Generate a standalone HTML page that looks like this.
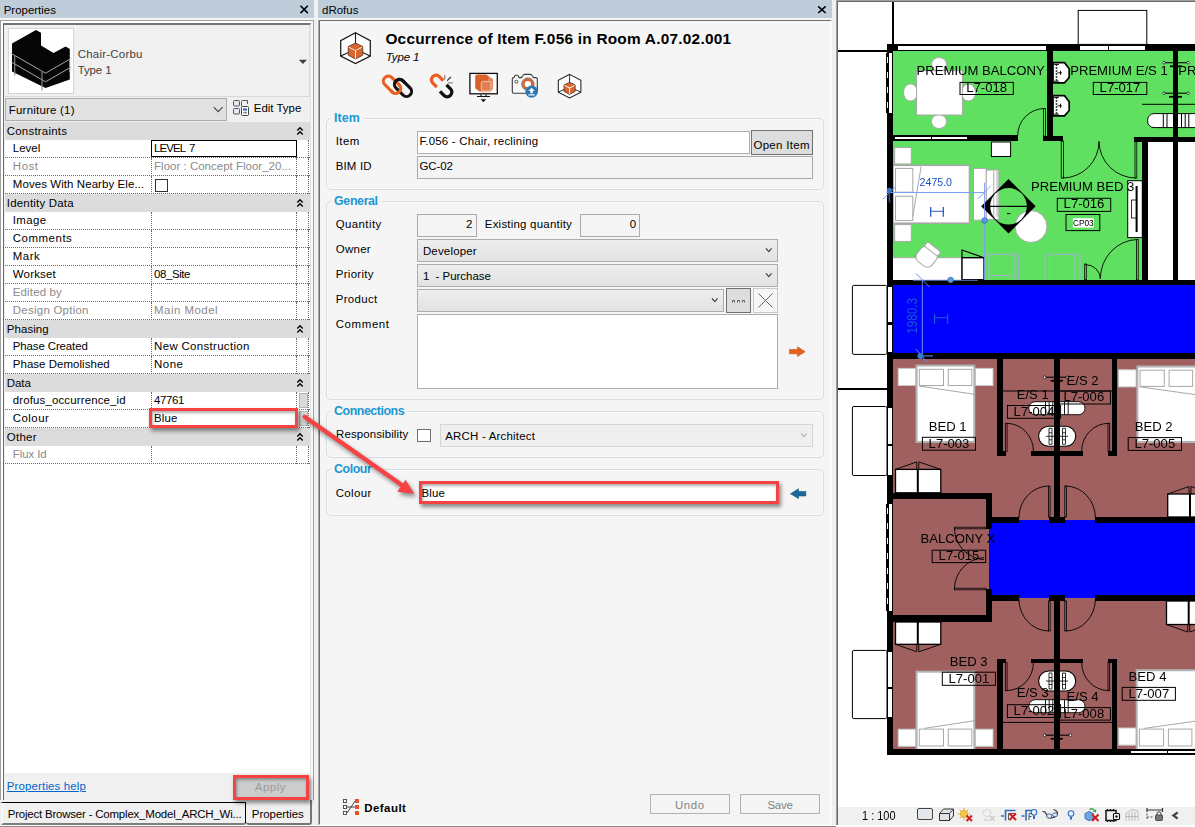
<!DOCTYPE html>
<html lang="en"><head><meta charset="utf-8"><title>dRofus - Revit properties</title>
<style>
html,body{margin:0;padding:0}
body{width:1195px;height:827px;position:relative;overflow:hidden;background:#f0f0f0;
 font-family:"Liberation Sans",sans-serif;font-size:11.46px;color:#000}
div,span,svg{position:absolute;box-sizing:border-box}
.t{white-space:pre;line-height:16px}
.hdr{left:5px;width:305px;height:18px;background:#dcdcdc}
.row{left:5px;width:305px;height:18px;background:#fff;border-bottom:1px dotted #6a6a6a}
.vl{width:0;border-left:1px dotted #6a6a6a}
.grp{border:1px solid #d3dde4;border-radius:5px;box-shadow:inset 0 0 0 1px #fafafa}
.gt{background:#f5f5f5;height:14px}
.inp{border:1px solid #abadb3;background:#fff}
.ro{border:1px solid #a9a9a9;background:#f4f4f4}
.cmb{border:1px solid #acacac;background:linear-gradient(#eeeeee,#e2e2e2)}
.btn{border:1px solid #707070;background:#dddddd}
</style></head>
<body>
<!-- Properties panel -->
<div style="left:0px;top:0px;width:314px;height:18px;background:#bfcddb"></div>
<span class="t" style="left:3.7px;top:2.03px;letter-spacing:0.007px;">Properties</span>
<svg style="left:299px;top:4px" width="11" height="11" viewBox="0 0 11 11"><path d="M1.5 1.8 L8.8 9.1 M8.8 1.8 L1.5 9.1" stroke="#000" stroke-width="1.6" fill="none"/></svg>
<div style="left:0px;top:18px;width:314px;height:2px;background:#f4f4f4"></div>
<div style="left:0px;top:20px;width:314px;height:805px;background:#f0f0f0;border-left:1px solid #a0a0a0;border-top:1px solid #a0a0a0;"></div>
<div style="left:1px;top:21px;width:312px;height:804px;border-left:2px solid #fff;border-top:2px solid #fff;border-right:3px solid #f8f8f8"></div>
<div style="left:313px;top:20px;width:1px;height:805px;background:#a0a0a0"></div>
<div style="left:3px;top:23px;width:308px;height:777px;border-left:1px solid #696969;border-top:2px solid #747474;border-right:1px solid #e3e3e3;background:#f0f0f0"></div>
<div style="left:5px;top:25px;width:305px;height:72px;background:#f0f0f0;border-bottom:1px solid #d9d9d9;border-right:1px solid #dcdcdc"></div>
<div style="left:8px;top:28px;width:66px;height:66px;background:#fff;border:1px solid #d4d4d4"></div>
<svg style="left:8px;top:28px" width="66" height="66" viewBox="8 28 66 66">
<polygon points="12,43.5 36,30 41,32.8 41,45.5 53.5,53 65.6,46.5 69.8,49 69.8,79.5 45.5,88 12,71.5" fill="#060606"/>
<path d="M10.5 53 L45.5 73.2 L71.5 58.2 M10.5 61.5 L45.5 81.8 L71.5 66.8" stroke="#b8b8b8" stroke-width="0.9" fill="none"/>
<path d="M14.7 56 V75.5 M42 72 V90.5 M69.6 60 V72" stroke="#8c8c8c" stroke-width="1.1" fill="none"/>
</svg>
<span class="t" style="left:77.7px;top:46.23px;color:#404040;letter-spacing:0.235px;">Chair-Corbu</span>
<span class="t" style="left:77.7px;top:62.03px;color:#404040;letter-spacing:-0.101px;">Type 1</span>
<svg style="left:298px;top:59px" width="10" height="6" viewBox="0 0 10 6"><polygon points="0.8,0.8 9,0.8 4.9,5" fill="#404040"/></svg>
<div style="left:5px;top:98px;width:222px;height:23px;background:#e1e1e1;border:1px solid #adadad"></div>
<span class="t" style="left:8.8px;top:102.43px;letter-spacing:0.227px;">Furniture (1)</span>
<svg style="left:213px;top:106px" width="11" height="8" viewBox="0 0 11 8"><path d="M0.8 1.2 L5.2 5.6 L9.6 1.2" stroke="#444" stroke-width="1.1" fill="none"/></svg>
<svg style="left:232px;top:99px" width="18" height="18" viewBox="0 0 18 18">
<rect x="1.5" y="1.5" width="6" height="5.5" rx="1" fill="#e4e9f2" stroke="#555" stroke-width="1"/>
<rect x="1.5" y="9.5" width="6" height="5.5" rx="1" fill="#e4e9f2" stroke="#555" stroke-width="1"/>
<path d="M9.5 7 V2.5 a1 1 0 0 1 1 -1 H15.5 V5" fill="#eef1f6" stroke="#555" stroke-width="1"/>
<rect x="9.5" y="7.5" width="7" height="9" rx="1" fill="#fff" stroke="#444" stroke-width="1"/>
<rect x="11" y="9.5" width="4" height="2" fill="#2860c0"/>
<path d="M11 13.7 h3.5 M13.3 12.6 l1.2 1.1 l-1.2 1.1" stroke="#555" stroke-width="0.8" fill="none"/>
</svg>
<span class="t" style="left:253.8px;top:100.03px;">Edit Type</span>
<div class="hdr" style="top:122px"></div>
<span class="t" style="left:6.8px;top:123.03px;letter-spacing:0.213px;">Constraints</span>
<svg style="left:295.5px;top:126px" width="8" height="10" viewBox="0 0 8 10"><path d="M1.3 4.4 L4 1.8 L6.7 4.4 M1.3 8.4 L4 5.800 L6.7 8.4" stroke="#000" stroke-width="1.4" fill="none"/></svg>
<div class="row" style="top:140px"></div>
<div class="vl" style="left:151px;top:140px;height:18px"></div><div class="vl" style="left:296px;top:140px;height:18px"></div><div class="vl" style="left:308px;top:140px;height:18px"></div>
<span class="t" style="left:12.8px;top:140.23px;letter-spacing:0.021px;">Level</span>
<div class="row" style="top:158px"></div>
<div class="vl" style="left:151px;top:158px;height:18px"></div><div class="vl" style="left:296px;top:158px;height:18px"></div><div class="vl" style="left:308px;top:158px;height:18px"></div>
<span class="t" style="left:12.8px;top:158.23px;color:#8a8a8a;letter-spacing:0.559px;">Host</span>
<span class="t" style="left:154.1px;top:158.23px;color:#8a8a8a;letter-spacing:0.025px;">Floor : Concept Floor_20...</span>
<div class="row" style="top:176px"></div>
<div class="vl" style="left:151px;top:176px;height:18px"></div><div class="vl" style="left:296px;top:176px;height:18px"></div><div class="vl" style="left:308px;top:176px;height:18px"></div>
<span class="t" style="left:12.8px;top:176.23px;letter-spacing:0.092px;">Moves With Nearby Ele...</span>
<div class="hdr" style="top:194px"></div>
<span class="t" style="left:6.8px;top:195.03px;letter-spacing:0.205px;">Identity Data</span>
<svg style="left:295.5px;top:198px" width="8" height="10" viewBox="0 0 8 10"><path d="M1.3 4.4 L4 1.8 L6.7 4.4 M1.3 8.4 L4 5.800 L6.7 8.4" stroke="#000" stroke-width="1.4" fill="none"/></svg>
<div class="row" style="top:212px"></div>
<div class="vl" style="left:151px;top:212px;height:18px"></div><div class="vl" style="left:296px;top:212px;height:18px"></div><div class="vl" style="left:308px;top:212px;height:18px"></div>
<span class="t" style="left:12.8px;top:212.23px;letter-spacing:0.390px;">Image</span>
<div class="row" style="top:230px"></div>
<div class="vl" style="left:151px;top:230px;height:18px"></div><div class="vl" style="left:296px;top:230px;height:18px"></div><div class="vl" style="left:308px;top:230px;height:18px"></div>
<span class="t" style="left:12.8px;top:230.23px;letter-spacing:0.524px;">Comments</span>
<div class="row" style="top:248px"></div>
<div class="vl" style="left:151px;top:248px;height:18px"></div><div class="vl" style="left:296px;top:248px;height:18px"></div><div class="vl" style="left:308px;top:248px;height:18px"></div>
<span class="t" style="left:12.8px;top:248.23px;letter-spacing:0.508px;">Mark</span>
<div class="row" style="top:266px"></div>
<div class="vl" style="left:151px;top:266px;height:18px"></div><div class="vl" style="left:296px;top:266px;height:18px"></div><div class="vl" style="left:308px;top:266px;height:18px"></div>
<span class="t" style="left:12.8px;top:266.23px;letter-spacing:0.198px;">Workset</span>
<span class="t" style="left:154.1px;top:266.23px;letter-spacing:-0.410px;">08_Site</span>
<div class="row" style="top:284px"></div>
<div class="vl" style="left:151px;top:284px;height:18px"></div><div class="vl" style="left:296px;top:284px;height:18px"></div><div class="vl" style="left:308px;top:284px;height:18px"></div>
<span class="t" style="left:12.8px;top:284.23px;color:#8a8a8a;letter-spacing:0.157px;">Edited by</span>
<div class="row" style="top:302px"></div>
<div class="vl" style="left:151px;top:302px;height:18px"></div><div class="vl" style="left:296px;top:302px;height:18px"></div><div class="vl" style="left:308px;top:302px;height:18px"></div>
<span class="t" style="left:12.8px;top:302.23px;color:#8a8a8a;letter-spacing:0.260px;">Design Option</span>
<span class="t" style="left:154.1px;top:302.23px;color:#8a8a8a;letter-spacing:0.476px;">Main Model</span>
<div class="hdr" style="top:320px"></div>
<span class="t" style="left:6.8px;top:321.03px;letter-spacing:0.084px;">Phasing</span>
<svg style="left:295.5px;top:324px" width="8" height="10" viewBox="0 0 8 10"><path d="M1.3 4.4 L4 1.8 L6.7 4.4 M1.3 8.4 L4 5.800 L6.7 8.4" stroke="#000" stroke-width="1.4" fill="none"/></svg>
<div class="row" style="top:338px"></div>
<div class="vl" style="left:151px;top:338px;height:18px"></div><div class="vl" style="left:296px;top:338px;height:18px"></div><div class="vl" style="left:308px;top:338px;height:18px"></div>
<span class="t" style="left:12.8px;top:338.23px;letter-spacing:-0.119px;">Phase Created</span>
<span class="t" style="left:154.1px;top:338.23px;letter-spacing:0.322px;">New Construction</span>
<div class="row" style="top:356px"></div>
<div class="vl" style="left:151px;top:356px;height:18px"></div><div class="vl" style="left:296px;top:356px;height:18px"></div><div class="vl" style="left:308px;top:356px;height:18px"></div>
<span class="t" style="left:12.8px;top:356.23px;letter-spacing:0.050px;">Phase Demolished</span>
<span class="t" style="left:154.1px;top:356.23px;letter-spacing:0.501px;">None</span>
<div class="hdr" style="top:374px"></div>
<span class="t" style="left:6.8px;top:375.03px;letter-spacing:-0.052px;">Data</span>
<svg style="left:295.5px;top:378px" width="8" height="10" viewBox="0 0 8 10"><path d="M1.3 4.4 L4 1.8 L6.7 4.4 M1.3 8.4 L4 5.800 L6.7 8.4" stroke="#000" stroke-width="1.4" fill="none"/></svg>
<div class="row" style="top:392px"></div>
<div class="vl" style="left:151px;top:392px;height:18px"></div><div class="vl" style="left:296px;top:392px;height:18px"></div><div class="vl" style="left:308px;top:392px;height:18px"></div>
<span class="t" style="left:12.8px;top:392.23px;letter-spacing:0.139px;">drofus_occurrence_id</span>
<span class="t" style="left:154.1px;top:392.23px;letter-spacing:-0.374px;">47761</span>
<div class="row" style="top:410px"></div>
<div class="vl" style="left:151px;top:410px;height:18px"></div><div class="vl" style="left:296px;top:410px;height:18px"></div><div class="vl" style="left:308px;top:410px;height:18px"></div>
<span class="t" style="left:12.8px;top:410.23px;letter-spacing:0.457px;">Colour</span>
<span class="t" style="left:154.1px;top:410.23px;letter-spacing:0.141px;">Blue</span>
<div class="hdr" style="top:428px"></div>
<span class="t" style="left:6.8px;top:429.03px;letter-spacing:0.268px;">Other</span>
<svg style="left:295.5px;top:432px" width="8" height="10" viewBox="0 0 8 10"><path d="M1.3 4.4 L4 1.8 L6.7 4.4 M1.3 8.4 L4 5.800 L6.7 8.4" stroke="#000" stroke-width="1.4" fill="none"/></svg>
<div class="row" style="top:446px"></div>
<div class="vl" style="left:151px;top:446px;height:18px"></div><div class="vl" style="left:296px;top:446px;height:18px"></div><div class="vl" style="left:308px;top:446px;height:18px"></div>
<span class="t" style="left:12.8px;top:446.23px;color:#8a8a8a;letter-spacing:-0.085px;">Flux Id</span>
<div style="left:5px;top:464px;width:305px;height:309px;background:#fff"></div>
<div style="left:151px;top:140px;width:146px;height:17px;border:1px solid #000;background:#fff"></div>
<span class="t" style="left:154.1px;top:140.33px;letter-spacing:-0.902px;word-spacing:2px;">LEVEL 7</span>
<div style="left:155px;top:179px;width:13px;height:13px;border:1px solid #333;background:#fff"></div>
<div style="left:299px;top:393px;width:9px;height:15px;background:#dadada;border:1px solid #b5b5b5"></div>
<div style="left:299px;top:411px;width:9px;height:15px;background:#dadada;border:1px solid #b5b5b5"></div>
<div style="left:5px;top:773px;width:305px;height:27px;background:#f0f0f0"></div>
<span class="t" style="left:6.8px;top:778.13px;color:#0066cc;letter-spacing:0.148px;text-decoration:underline;text-underline-offset:1px">Properties help</span>
<div style="left:0px;top:800px;width:318px;height:27px;background:#f0f0f0"></div>
<div style="left:0px;top:802px;width:246px;height:23px;background:#f0f0f0;border-top:1px solid #000;border-right:1px solid #000;border-bottom:2px solid #7d7d7d;border-left:3px solid #f0f0f0;border-radius:0 0 3px 3px"></div>
<div style="left:2px;top:803px;width:1px;height:20px;background:#fcfcfc"></div>
<span class="t" style="left:7.7px;top:806.23px;letter-spacing:-0.191px;">Project Browser - Complex_Model_ARCH_Wi...</span>
<div style="left:246px;top:800px;width:66px;height:25px;background:#f0f0f0;border-right:2px solid #767676;border-bottom:2px solid #767676;border-radius:0 0 3px 3px"></div>
<span class="t" style="left:251.8px;top:806.23px;letter-spacing:-0.023px;">Properties</span>
<div style="left:0px;top:825px;width:1195px;height:1px;background:#fbfbfb"></div>
<div style="left:0px;top:826px;width:1195px;height:1px;background:#8c8c8c"></div>
<div style="left:314px;top:0px;width:4px;height:825px;background:#f0f0f0"></div>
<!-- dRofus panel -->
<div style="left:318px;top:0px;width:514px;height:18px;background:#bfcddb"></div>
<span class="t" style="left:322.1px;top:2.03px;">dRofus</span>
<svg style="left:816px;top:4px" width="12" height="11" viewBox="0 0 12 11"><path d="M2.2 2.3 L9.6 9 M9.6 2.3 L2.2 9" stroke="#000" stroke-width="1.6" fill="none"/></svg>
<div style="left:318px;top:18px;width:514px;height:2px;background:#f4f4f4"></div>
<div style="left:832px;top:0px;width:4px;height:825px;background:#f0f0f0"></div>
<div style="left:318px;top:20px;width:514px;height:805px;background:#f5f5f5;border-left:2px solid #6f6f6f;border-top:1px solid #6f6f6f;border-right:2px solid #fbfbfb;border-bottom:1px solid #fbfbfb"></div>
<div style="left:318px;top:20px;width:1px;height:805px;background:#a9a9a9"></div>
<svg style="left:339px;top:31px" width="33.0" height="34.0" viewBox="-1 -1 33 34">
<polygon points="15.5,0.8 30.3,8.6 30.3,24 15.5,31.6 0.7,24 0.7,8.6" fill="#fff" stroke="#1a1a1a" stroke-width="1.25"/>
<path d="M15.5 0.8 V12 M0.7 24 L8.4 20.6 M30.3 24 L22.6 20.6" stroke="#1a1a1a" stroke-width="1.10" fill="none"/>
<polygon points="15.5,11 22.8,14.6 22.8,23.2 15.5,27 8.2,23.2 8.2,14.6" fill="#d9652f" stroke="#3a2418" stroke-width="0.70"/>
<path d="M15.5 18.6 V26.6 M15.5 18.6 L8.8 15.2 M15.5 18.6 L22.2 15.2" stroke="#fbe9df" stroke-width="1.00" fill="none"/>
</svg>
<span class="t" style="left:385.4px;top:30.87px;font-size:15.38px;font-weight:700;letter-spacing:0.242px;">Occurrence of Item F.056 in Room A.07.02.001</span>
<span class="t" style="left:385.7px;top:49.13px;font-style:italic;letter-spacing:-0.081px;">Type 1</span>
<svg style="left:378px;top:70px" width="40" height="32" viewBox="378 70 40 32"><rect x="-10.1" y="-5.0" width="20.2" height="10.0" rx="5.0" transform="translate(392,84.7) rotate(45)" stroke="#ec5f24" stroke-width="3.1" fill="none"/><rect x="-10.0" y="-5.0" width="20.0" height="10.0" rx="5.0" transform="translate(403,87.95) rotate(45)" stroke="#111" stroke-width="3.1" fill="none"/><g transform="translate(392,84.7) rotate(45)"><path d="M2.5 -5 H5.1 A5 5 0 0 1 5.1 5 H3" stroke="#ec5f24" stroke-width="3.1" fill="none"/></g><g transform="translate(403,87.95) rotate(45)"><path d="M-2 -5 H-5 A5 5 0 0 0 -9.7 -1.5" stroke="#111" stroke-width="3.1" fill="none"/></g></svg>
<svg style="left:427px;top:70px" width="32" height="32" viewBox="427 70 32 32">
<g transform="translate(436.1,79.9) rotate(45)"><path d="M5.6 -4.6 H0 A4.6 4.6 0 0 0 0 4.6 H5.6" stroke="#ec5f24" stroke-width="3.4" fill="none"/></g>
<g transform="translate(447.2,92.1) rotate(45)"><path d="M-5.6 -4.6 H0 A4.6 4.6 0 0 1 0 4.6 H-5.6" stroke="#111" stroke-width="3.4" fill="none"/></g>
<path d="M444.7 75.2 V79.6 M448 82.9 H452.7" stroke="#888" stroke-width="1.3" fill="none"/><path d="M447.2 80.6 L450.9 76.9" stroke="#222" stroke-width="1.1" fill="none"/>
</svg>
<svg style="left:468px;top:71px" width="32" height="33" viewBox="468 71 32 33">
<rect x="469.9" y="73.4" width="27.4" height="20.4" fill="#fcfcfc" stroke="#111" stroke-width="1.3"/>
<path d="M476.6 74.6 h9.6 l6.8 5 v9 l-2.4 3 h-11 l-4.4 -3.4 v-11.600 a2 2 0 0 1 2 -2 z" fill="#d9622b"/>
<path d="M486.2 74.6 l6.8 5 v9 l-4.800 -0.200 v-11.800 z" fill="#e3875c"/>
<rect x="481.3" y="81.4" width="9.700" height="9.600" rx="1.800" fill="#e27f52" stroke="#f3cdbb" stroke-width="0.9"/>
<path d="M483 91 l-1.500 1.500 h8.500 l1.500 -1.500" fill="#f1c4af"/>
<path d="M477 96.500 h13 M481 94.400 v2 M486 94.400 v2" stroke="#111" stroke-width="1.200" fill="none"/>
<polygon points="480.7,99.300 486.1,99.300 483.4,102.200" fill="#111"/>
</svg>
<svg style="left:510px;top:72px" width="30" height="28" viewBox="510 72 30 28">
<path d="M514 77.600 l0.800 -1.800 q0.300 -0.500 0.900 -0.500 h1.600 q0.600 0 0.900 0.500 l0.800 1.800 h2.400 l2 -2.600 q0.500 -0.600 1.300 -0.600 h5.600 q0.800 0 1.300 0.600 l2 2.600 h2.200 q1.500 0 1.500 1.500 v12.600 q0 1.500 -1.500 1.500 h-22 q-1.500 0 -1.500 -1.500 v-12.600 q0 -1.500 1.500 -1.500 z" fill="#f9f9f9" stroke="#3c3c3c" stroke-width="1.100"/>
<circle cx="516.4" cy="81.700" r="1.500" fill="#fff" stroke="#3c3c3c" stroke-width="0.900"/>
<circle cx="527.9" cy="84.100" r="4.500" fill="#fff" stroke="#d9622b" stroke-width="2.600"/>
<circle cx="527.9" cy="84.100" r="6.200" fill="none" stroke="#3c3c3c" stroke-width="0.700"/>
<circle cx="531.6" cy="91.600" r="6.200" fill="#2f79b3"/>
<path d="M531.600 87.800 l3.100 3.300 h-1.900 v2.200 h-2.400 v-2.200 h-1.900 z" fill="#fff"/><path d="M528.400 94.900 h6.400" stroke="#fff" stroke-width="1.200"/>
</svg>
<svg style="left:557px;top:73px" width="25.2" height="26.0" viewBox="-1 -1 33 34">
<polygon points="15.5,0.8 30.3,8.6 30.3,24 15.5,31.6 0.7,24 0.7,8.6" fill="#fff" stroke="#1a1a1a" stroke-width="1.33"/>
<path d="M15.5 0.8 V12 M0.7 24 L8.4 20.6 M30.3 24 L22.6 20.6" stroke="#1a1a1a" stroke-width="1.17" fill="none"/>
<polygon points="15.5,11 22.8,14.6 22.8,23.2 15.5,27 8.2,23.2 8.2,14.6" fill="#d9652f" stroke="#3a2418" stroke-width="0.93"/>
<path d="M15.5 18.6 V26.6 M15.5 18.6 L8.8 15.2 M15.5 18.6 L22.2 15.2" stroke="#fbe9df" stroke-width="1.33" fill="none"/>
</svg>
<div class="grp" style="left:326px;top:118px;width:498px;height:72px;"></div>
<div class="gt" style="left:331px;top:112px;width:32.8px;height:14px;"></div>
<span class="t" style="left:334.1px;top:109.50px;font-size:12.41px;font-weight:700;color:#1c97d4;letter-spacing:0.071px;">Item</span>
<div class="grp" style="left:326px;top:201px;width:498px;height:199px;"></div>
<div class="gt" style="left:331px;top:195px;width:50.6px;height:14px;"></div>
<span class="t" style="left:334.1px;top:192.50px;font-size:12.41px;font-weight:700;color:#1c97d4;letter-spacing:-0.374px;">General</span>
<div class="grp" style="left:326px;top:411px;width:498px;height:47px;"></div>
<div class="gt" style="left:331px;top:405px;width:77px;height:14px;"></div>
<span class="t" style="left:334.1px;top:402.50px;font-size:12.41px;font-weight:700;color:#1c97d4;letter-spacing:-0.468px;">Connections</span>
<div class="grp" style="left:326px;top:469px;width:498px;height:47px;"></div>
<div class="gt" style="left:331px;top:463px;width:44.3px;height:14px;"></div>
<span class="t" style="left:334.1px;top:460.50px;font-size:12.41px;font-weight:700;color:#1c97d4;letter-spacing:-0.447px;">Colour</span>
<span class="t" style="left:335.7px;top:133.43px;letter-spacing:0.428px;">Item</span>
<div class="inp" style="left:417px;top:131px;width:333px;height:23px;"></div>
<span class="t" style="left:419.4px;top:133.43px;letter-spacing:0.207px;">F.056 - Chair, reclining</span>
<div class="btn" style="left:751px;top:130px;width:62px;height:25px;"></div>
<span class="t" style="left:753.4px;top:136.63px;letter-spacing:0.344px;">Open Item</span>
<span class="t" style="left:335.7px;top:158.33px;letter-spacing:0.164px;">BIM ID</span>
<div class="ro" style="left:417px;top:156px;width:396px;height:23px;"></div>
<span class="t" style="left:419.4px;top:158.33px;letter-spacing:-0.051px;">GC-02</span>
<span class="t" style="left:335.7px;top:216.13px;letter-spacing:0.415px;">Quantity</span>
<div class="ro" style="left:417px;top:214px;width:60px;height:23px;"></div>
<span class="t" style="left:465.9px;top:216.13px;letter-spacing:0.626px;">2</span>
<span class="t" style="left:484.8px;top:216.13px;letter-spacing:0.226px;">Existing quantity</span>
<div class="ro" style="left:580px;top:214px;width:60px;height:23px;"></div>
<span class="t" style="left:629.7px;top:216.13px;letter-spacing:0.626px;">0</span>
<span class="t" style="left:335.7px;top:241.23px;letter-spacing:0.309px;">Owner</span>
<div class="cmb" style="left:417px;top:239px;width:361px;height:23px;"></div>
<span class="t" style="left:422.9px;top:243.23px;letter-spacing:0.196px;">Developer</span>
<span class="t" style="left:335.7px;top:266.33px;letter-spacing:0.318px;">Priority</span>
<div class="cmb" style="left:417px;top:264px;width:361px;height:23px;"></div>
<span class="t" style="left:422.9px;top:268.23px;letter-spacing:-0.012px;">1  - Purchase</span>
<span class="t" style="left:335.7px;top:290.63px;letter-spacing:0.358px;">Product</span>
<div class="cmb" style="left:417px;top:289px;width:307px;height:23px;"></div>
<svg style="left:765px;top:247px" width="8" height="7" viewBox="0 0 8 7"><path d="M1 1.3 L3.8 4.6 L6.6 1.3" stroke="#444" stroke-width="1.3" fill="none"/></svg>
<svg style="left:765px;top:272px" width="8" height="7" viewBox="0 0 8 7"><path d="M1 1.3 L3.8 4.6 L6.6 1.3" stroke="#444" stroke-width="1.3" fill="none"/></svg>
<svg style="left:711px;top:297px" width="8" height="7" viewBox="0 0 8 7"><path d="M1 1.3 L3.8 4.6 L6.6 1.3" stroke="#444" stroke-width="1.3" fill="none"/></svg>
<div class="btn" style="left:726px;top:288px;width:25px;height:25px;"></div>
<svg style="left:731px;top:298px" width="15" height="6" viewBox="0 0 15 6"><path d="M1.5 4.5 v-2 h2 v2 M6.5 4.5 v-2 h2 v2 M11.5 4.5 v-2 h2 v2" stroke="#555" stroke-width="0.9" fill="none"/></svg>
<div style="left:753px;top:288px;width:25px;height:25px;border:1px solid #c9c9c9;background:#f6f6f6"></div>
<svg style="left:753px;top:288px" width="25" height="25" viewBox="0 0 25 25"><path d="M5.5 5.5 L19.5 19.5 M19.5 5.5 L5.5 19.5" stroke="#555" stroke-width="0.9" fill="none"/></svg>
<span class="t" style="left:335.7px;top:316.13px;letter-spacing:0.618px;">Comment</span>
<div class="inp" style="left:417px;top:314px;width:361px;height:75px;"></div>
<svg style="left:788px;top:345px" width="19" height="13" viewBox="788 345 19 13"><polygon points="789.5,349.5 797.5,349.5 797.5,346.8 805.2,351.7 797.5,356.4 797.5,353.8 789.5,353.8" fill="#e8601c" stroke="#c24e14" stroke-width="0.6"/></svg>
<span class="t" style="left:336.0px;top:425.63px;letter-spacing:0.121px;">Responsibility</span>
<div style="left:417px;top:429px;width:14px;height:13px;border:1px solid #707070;background:#fff"></div>
<div style="left:440px;top:424px;width:373px;height:23px;border:1px solid #d5d5d5;background:#efefef"></div>
<span class="t" style="left:445.2px;top:428.43px;letter-spacing:0.212px;">ARCH - Architect</span>
<svg style="left:800px;top:432px" width="8" height="7" viewBox="0 0 8 7"><path d="M1 1.3 L3.8 4.6 L6.6 1.3" stroke="#b5b5b5" stroke-width="1.3" fill="none"/></svg>
<span class="t" style="left:335.7px;top:484.63px;letter-spacing:0.373px;">Colour</span>
<svg style="left:789px;top:487px" width="19" height="13" viewBox="789 487 19 13"><polygon points="805.8,491.5 798.5,491.5 798.5,488.8 790.5,493.8 798.5,498.6 798.5,496 805.8,496" fill="#1a6a9a" stroke="#145578" stroke-width="0.6"/></svg>
<svg style="left:342px;top:798px" width="18" height="18" viewBox="342 798 18 18">
<g fill="#fff" stroke="#444" stroke-width="0.9"><rect x="343.5" y="799.5" width="3" height="3"/><rect x="343.5" y="805.5" width="3" height="3"/><rect x="343.5" y="811.5" width="3" height="3"/></g>
<path d="M347 813 L355.5 800.5 M347 807 H355" stroke="#333" stroke-width="0.9" fill="none"/>
<g fill="#e8502a"><rect x="355" y="799" width="4" height="4"/><rect x="355" y="805" width="4" height="4"/><rect x="355" y="811" width="4" height="4"/></g>
</svg>
<span class="t" style="left:364.2px;top:800.33px;font-weight:700;letter-spacing:0.480px;">Default</span>
<div style="left:650px;top:794px;width:80px;height:20px;border:1px solid #adb2b5;background:#f4f4f4"></div>
<span class="t" style="left:675.0px;top:797.43px;color:#838383;letter-spacing:0.601px;">Undo</span>
<div style="left:740px;top:794px;width:80px;height:20px;border:1px solid #adb2b5;background:#f4f4f4"></div>
<span class="t" style="left:767.4px;top:797.43px;color:#838383;letter-spacing:-0.205px;">Save</span>
<!-- Floor plan view -->
<svg style="left:836px;top:0px;will-change:transform" width="359" height="827" viewBox="836 0 359 827" font-family="Liberation Sans, sans-serif" font-size="13.1">
<defs><mask id="dm" maskUnits="userSpaceOnUse" x="975" y="175" width="70" height="65"><polygon points="1008.5,179.1 1035.7,206.3 1008.5,233.6 981.2,206.3" fill="#fff"/><circle cx="1008.5" cy="206.3" r="18.3" fill="#000"/></mask></defs>
<rect x="836" y="0" width="359" height="827" fill="#fff"/>
<g shape-rendering="crispEdges">
<rect x="836" y="0" width="359" height="1" fill="#a0a0a0"/><rect x="837" y="1" width="358" height="1" fill="#696969"/>
<rect x="836" y="0" width="1" height="825" fill="#a0a0a0"/><rect x="837" y="1" width="1" height="824" fill="#696969"/>
<rect x="893" y="51" width="302" height="230" fill="#60e060"/>
<rect x="1148" y="142" width="25" height="138" fill="#fff"/><rect x="1178" y="142" width="17" height="138" fill="#fff"/>
<rect x="893" y="284" width="302" height="70" fill="#0000ff"/>
<rect x="893" y="358" width="302" height="392" fill="#a06060"/>
<rect x="989" y="520" width="206" height="78" fill="#0000ff"/>
</g>
<g fill="#fff" stroke="#a8a8a8" stroke-width="1">
<ellipse cx="939" cy="64.5" rx="7.6" ry="7"/>
<ellipse cx="939" cy="121.5" rx="7.6" ry="7"/>
<ellipse cx="910.5" cy="92.5" rx="7" ry="8.6"/>
<ellipse cx="968.5" cy="92.5" rx="7" ry="8.6"/>
<rect x="916.6" y="70.7" width="45.8" height="44.3"/>
<rect x="894.7" y="147.5" width="16.6" height="16.5"/><rect x="894.7" y="224.6" width="16.6" height="16.8"/>
<rect x="893" y="165.3" width="76.5" height="57.9" stroke-width="1.6"/>
<rect x="895.5" y="168.4" width="17.3" height="23.8"/><rect x="895.5" y="196.3" width="17.3" height="24.2"/>
<path d="M921.1 166.5 L912.8 216.7" fill="none"/>
<rect x="973.5" y="168.4" width="12.8" height="51.8"/><rect x="986.3" y="170" width="12.5" height="49.4"/><path d="M993.8 171 V217 M997 171 V217" fill="none"/>
<circle cx="1031" cy="226.5" r="16"/>
<rect x="893" y="257.7" width="68.2" height="23" stroke="none"/><path d="M893 257.7 H961.2" fill="none"/>
<g transform="translate(927,257) rotate(38)"><rect x="-10" y="-9" width="19" height="18" rx="6"/><rect x="-9" y="-12.5" width="17" height="5.5" rx="2"/></g>
<g stroke="#c8c8c8">
<rect x="898.2" y="368.4" width="17.5" height="17.1"/>
<rect x="975.5" y="368.4" width="17.5" height="17.1"/>
<rect x="1118.6" y="369.8" width="17.5" height="17.1"/>
<rect x="898.2" y="729.2" width="17.5" height="17.1"/>
<rect x="975.5" y="729.2" width="17.5" height="17.1"/>
<rect x="1118.7" y="728" width="17.5" height="17.1"/>
</g>
<rect x="916.6" y="365.6" width="57.7" height="76.3" stroke-width="2" stroke="#b4b4b4"/>
<rect x="919.3000000000001" y="369.3" width="24.2" height="16.2"/><rect x="948.3000000000001" y="369.3" width="23.5" height="16.2"/>
<path d="M919.3000000000001 386.0 L974.3000000000001 394.3" fill="none"/>
<rect x="1137.4" y="366.5" width="62" height="75.5" stroke-width="2" stroke="#b4b4b4"/>
<rect x="1140.1000000000001" y="370.2" width="24.2" height="16.2"/><rect x="1169.1000000000001" y="370.2" width="23.5" height="16.2"/>
<path d="M1140.1000000000001 386.9 L1199.4 395.2" fill="none"/>
<rect x="916.6" y="671.7" width="57.7" height="78" stroke-width="2" stroke="#b4b4b4"/>
<rect x="919.3000000000001" y="729.1" width="24.2" height="16.9"/><rect x="948.3000000000001" y="729.1" width="23.5" height="16.9"/>
<path d="M924.2 728.4000000000001 L974.3000000000001 720.7" fill="none"/>
<rect x="1136.7" y="670.2" width="62" height="79.5" stroke-width="2" stroke="#b4b4b4"/>
<rect x="1139.4" y="729.1" width="24.2" height="16.9"/><rect x="1168.4" y="729.1" width="23.5" height="16.9"/>
<path d="M1144.3 728.4000000000001 L1198.7 720.7" fill="none"/>
</g>
<g fill="none" stroke="#a3b1d9" stroke-width="1"><rect x="984.6" y="254.3" width="34" height="27"/><path d="M989 254.3 V281 M1014 254.3 V281 M989 275.5 H1014"/><rect x="1045" y="254.3" width="35" height="27"/><path d="M1049.5 254.3 V281 M1075 254.3 V281"/></g>
<g fill="#fff" stroke="#000" stroke-width="1">
<rect x="991.4" y="142" width="19.2" height="14.5"/>
<rect x="1127.7" y="180.7" width="14.6" height="56.9"/><rect x="1131.5" y="200" width="5" height="18" stroke-width="0.8"/><path d="M1136.6 186 V232" stroke-width="2"/>
<rect x="962" y="257.7" width="22" height="22" stroke-width="1.4"/><path d="M962 257.7 V250 L984 257.7" fill="none" stroke-width="1.2"/>
<path d="M1053 62.7 H1064.5 L1069.2 68.7 V77.5 L1064.5 82.80000000000001 H1053 Z" stroke-width="1.7"/><path d="M1056.5 64.2 V81.2" fill="none" stroke-width="1.6" stroke-dasharray="1.5 1.5"/><path d="M1054 64.4 H1059 M1054 81.2 H1059 M1057.5 72.8 H1062 M1060.5 70.7 V74.9" fill="none" stroke-width="0.9"/>
<path d="M1053 95.7 H1064.5 L1069.2 101.7 V110.5 L1064.5 115.80000000000001 H1053 Z" stroke-width="1.7"/><path d="M1056.5 97.2 V114.2" fill="none" stroke-width="1.6" stroke-dasharray="1.5 1.5"/><path d="M1054 97.4 H1059 M1054 114.2 H1059 M1057.5 105.8 H1062 M1060.5 103.7 V107.9" fill="none" stroke-width="0.9"/>
<rect x="1147.6" y="113.6" width="60" height="14" rx="6.5"/><path d="M1163.3 113.6 V127.6 M1167 113.6 V127.6 M1181.5 113.6 V127.6 M1185.2 113.6 V127.6 M1188.8 113.6 V127.6" fill="none"/>
<rect x="1028.8" y="401.7" width="56.2" height="13" rx="6.5" stroke-width="0.9"/><path d="M1045.5 401.7 v13 M1049.2 401.7 v13 M1052.8 401.7 v13 M1064.5 401.7 v13 M1068.2 401.7 v13" fill="none" stroke-width="0.9"/>
<rect x="1028.8" y="699.7" width="56.2" height="13" rx="6.5" stroke-width="0.9"/><path d="M1045.5 699.7 v13 M1049.2 699.7 v13 M1052.8 699.7 v13 M1064.5 699.7 v13 M1068.2 699.7 v13" fill="none" stroke-width="0.9"/>
<rect x="1038.6" y="426.3" width="37.1" height="20" rx="10" stroke-width="1.1"/><path d="M1049 428.3 v16 M1052 428.3 v16 M1062.5 428.3 v16 M1065.5 428.3 v16 M1049 428.3 h3 M1049 444.3 h3 M1062.5 428.3 h3 M1062.5 444.3 h3 M1046 436.3 h8 M1060 436.3 h8 M1049 432.8 h3 M1049 439.8 h3 M1062.5 432.8 h3 M1062.5 439.8 h3" fill="none" stroke-width="0.8"/>
<rect x="1038.6" y="671" width="37.1" height="20" rx="10" stroke-width="1.1"/><path d="M1049 673 v16 M1052 673 v16 M1062.5 673 v16 M1065.5 673 v16 M1049 673 h3 M1049 689 h3 M1062.5 673 h3 M1062.5 689 h3 M1046 681 h8 M1060 681 h8 M1049 677.5 h3 M1049 684.5 h3 M1062.5 677.5 h3 M1062.5 684.5 h3" fill="none" stroke-width="0.8"/>
<rect x="895.5" y="469.4" width="45.3" height="23.4" stroke-width="1.3"/><path d="M917.8 469.4 V492.79999999999995" stroke-width="2" fill="none"/>
<path d="M895.5 469.4 L916.8 461.9 V469.4 M940.8 469.4 L918.8 461.9 V469.4" fill="none" stroke-width="0.9"/>
<rect x="1167.7" y="494" width="45" height="23" stroke-width="1.3"/><path d="M1190 494 V517" stroke-width="2" fill="none"/>
<path d="M1167.7 494 L1189 486.5 V494 M1212.7 494 L1191 486.5 V494" fill="none" stroke-width="0.9"/>
<rect x="895.5" y="622" width="45.3" height="22.3" stroke-width="1.3"/><path d="M917.8 622 V644.3" stroke-width="2" fill="none"/>
<path d="M895.5 644.3 L916.8 651.8 V644.3 M940.8 644.3 L918.8 651.8 V644.3" fill="none" stroke-width="0.9"/>
<rect x="1166.5" y="601" width="45" height="23.5" stroke-width="1.3"/><path d="M1188.7 601 V624.5" stroke-width="2" fill="none"/>
<path d="M1166.5 624.5 L1187.7 632.0 V624.5 M1211.5 624.5 L1189.7 632.0 V624.5" fill="none" stroke-width="0.9"/>
</g>
<g fill="none" stroke="#000" stroke-width="1">
<path d="M1142 104.3 H1195 M1002.8 391 H1112 M1002.8 722.4 H1112"/>
<path d="M1164 62.7 H1188" stroke-width="1.1"/><path d="M1170 66.3 H1182" stroke-width="1.8"/><circle cx="1164" cy="62.7" r="1.3" fill="#fff" stroke-width="0.7"/><circle cx="1188" cy="62.7" r="1.3" fill="#fff" stroke-width="0.7"/>
<path d="M1164 93.2 H1188" stroke-width="1.1"/><path d="M1169 96.8 H1182" stroke-width="1.8"/><circle cx="1164" cy="93.2" r="1.3" fill="#fff" stroke-width="0.7"/><circle cx="1188" cy="93.2" r="1.3" fill="#fff" stroke-width="0.7"/>
<path d="M1044.7 377.2 H1067.4" stroke-width="1.1"/><path d="M1050.7 380.8 H1062.8" stroke-width="1.8"/><circle cx="1044.7" cy="377.2" r="1.3" fill="#fff" stroke-width="0.7"/><circle cx="1067.4" cy="377.2" r="1.3" fill="#fff" stroke-width="0.7"/>
<path d="M1044.7 735.2 H1070.4" stroke-width="1.1"/><path d="M1050.7 738.8000000000001 H1062.8" stroke-width="1.8"/><circle cx="1044.7" cy="735.2" r="1.3" fill="#fff" stroke-width="0.7"/><circle cx="1070.4" cy="735.2" r="1.3" fill="#fff" stroke-width="0.7"/>
<rect x="1043.4" y="108.5" width="2.2" height="27.5" stroke-width="0.8"/><path d="M1044.5 108.5 A27 27 0 0 0 1017.7 135.5" stroke-width="0.9"/>
<rect x="1061.2" y="141" width="2.3" height="37" stroke-width="0.8"/><path d="M1062.5 178 A36.6 36.6 0 0 0 1099 141.4" stroke-width="0.9"/>
<rect x="1135" y="141" width="1.8" height="37" stroke-width="0.8"/><path d="M1136 178 A37 37 0 0 1 1099 141.4" stroke-width="0.9"/>
<rect x="1136.6" y="239.5" width="1.6" height="40" stroke-width="0.8"/><path d="M1137.4 239.5 A38 39 0 0 0 1100.4 278.7" stroke-width="0.9"/>
<rect x="1084.7" y="264" width="1.6" height="16" stroke-width="0.8"/><path d="M1085.9 264.7 A14.5 14.5 0 0 1 1100.4 278.7" stroke-width="0.9"/>
<rect x="1005.4" y="423.3" width="1.7" height="28" stroke-width="0.8"/><path d="M1007 423.3 A27 27.7 0 0 1 1033.4 451" stroke-width="0.9"/>
<rect x="1108" y="423.3" width="1.7" height="28" stroke-width="0.8"/><path d="M1108.5 423.3 A27 27.7 0 0 0 1081.7 451" stroke-width="0.9"/>
<rect x="1005.4" y="662.7" width="1.7" height="28" stroke-width="0.8"/><path d="M1007 690.6 A27 27.9 0 0 0 1033.4 662.7" stroke-width="0.9"/>
<rect x="1108" y="662.7" width="1.7" height="28" stroke-width="0.8"/><path d="M1108.5 690.6 A27 27.9 0 0 1 1081.7 662.7" stroke-width="0.9"/>
<rect x="1048.4" y="486" width="1.7" height="31" stroke-width="0.8"/><path d="M1048.4 486 A30 32 0 0 0 1018.9 518.5" stroke-width="0.9"/>
<rect x="1064.8" y="486" width="1.7" height="31" stroke-width="0.8"/><path d="M1066 486 A30 32 0 0 1 1095.4 518.5" stroke-width="0.9"/>
<rect x="1048.4" y="601" width="1.7" height="30" stroke-width="0.8"/><path d="M1048.4 631 A30 32 0 0 1 1018.9 599" stroke-width="0.9"/>
<rect x="1064.8" y="601" width="1.7" height="30" stroke-width="0.8"/><path d="M1066 631 A30 32 0 0 0 1095.4 599" stroke-width="0.9"/>
<rect x="954.4" y="527.2" width="31.6" height="1.6" stroke-width="0.8"/><path d="M954.4 528 A31.6 31.6 0 0 0 984 559.6" stroke-width="0.9"/>
<rect x="954.4" y="588.2" width="31.6" height="1.6" stroke-width="0.8"/><path d="M954.4 589 A31.6 31.6 0 0 1 984 557.6" stroke-width="0.9"/>
</g>
<g shape-rendering="crispEdges" fill="#000">
<rect x="887" y="44" width="6" height="711"/>
<rect x="887" y="44" width="308" height="7"/>
<rect x="1047" y="44" width="6" height="97"/>
<rect x="1173" y="51" width="5" height="230"/>
<rect x="893" y="135" width="125" height="6"/>
<rect x="1043" y="136" width="20" height="5"/>
<rect x="1134" y="137" width="61" height="5"/>
<rect x="1142" y="137" width="6" height="144"/>
<rect x="887" y="280" width="308" height="5"/>
<rect x="887" y="353" width="308" height="6"/>
<rect x="997" y="358" width="6" height="98"/>
<rect x="997" y="451" width="9" height="5"/>
<rect x="1054" y="358" width="6" height="165"/>
<rect x="1054" y="595" width="6" height="155"/>
<rect x="1112" y="358" width="5" height="98"/>
<rect x="1108" y="451" width="9" height="5"/>
<rect x="1031" y="451" width="52" height="5"/>
<rect x="887" y="493" width="105" height="6"/>
<rect x="986" y="493" width="6" height="36"/>
<rect x="992" y="517" width="27" height="6"/>
<rect x="1049" y="517" width="16" height="6"/>
<rect x="1095" y="517" width="100" height="6"/>
<rect x="992" y="595" width="27" height="6"/>
<rect x="1049" y="595" width="16" height="6"/>
<rect x="1095" y="595" width="100" height="6"/>
<rect x="986" y="589" width="6" height="33"/>
<rect x="887" y="615" width="105" height="7"/>
<rect x="997" y="659" width="6" height="91"/>
<rect x="997" y="659" width="9" height="4"/>
<rect x="1112" y="659" width="5" height="91"/>
<rect x="1108" y="659" width="9" height="4"/>
<rect x="1031" y="659" width="52" height="4"/>
<rect x="887" y="749" width="308" height="6"/>
<rect x="892" y="2" width="2" height="42"/>
<rect x="838" y="50" width="49" height="2"/>
<rect x="838" y="388" width="49" height="2"/>
<g fill="#fff">
<rect x="898" y="46" width="148" height="4"/>
<rect x="1080" y="46" width="28" height="4"/>
<rect x="1109" y="46" width="36" height="4"/>
<rect x="895" y="137" width="36" height="2"/>
<rect x="932" y="137" width="35" height="2"/>
<rect x="1131" y="751" width="36" height="2"/>
<rect x="1168" y="751" width="27" height="2"/>
<rect x="889" y="53" width="3" height="60"/>
<rect x="889" y="504" width="3" height="107"/>
<rect x="888" y="287" width="4" height="35"/>
<rect x="888" y="325" width="4" height="27"/>
<rect x="888" y="408" width="4" height="36"/>
<rect x="888" y="446" width="4" height="29"/>
<rect x="888" y="652" width="4" height="35"/>
<rect x="888" y="689" width="4" height="28"/>
</g>
<rect x="886" y="53" width="1" height="60"/><rect x="886" y="504" width="1" height="107"/>
<path d="M887.5 54 V112 M887.5 505 V610" stroke="#fff" stroke-width="1" stroke-dasharray="6 9" stroke-dashoffset="-3" fill="none"/>
</g>
<g fill="#fff" stroke="#000" stroke-width="1"><rect x="852.4" y="285.4" width="34.6" height="69" rx="1.5"/><rect x="852.4" y="406.5" width="34.6" height="69" rx="1.5"/><rect x="852.4" y="650.4" width="34.6" height="68.2" rx="1.5"/><rect x="1078.2" y="10.4" width="68.6" height="34"/></g>
<rect x="975" y="175" width="70" height="65" fill="#000" mask="url(#dm)"/>
<path d="M990 206.4 H1027.500" stroke="#000" stroke-width="1.1"/><path d="M1007 213.6 h3.4" stroke="#000" stroke-width="1"/>
<text x="916.6" y="74.8">PREMIUM BALCONY</text>
<rect x="960" y="82.4" width="53.3" height="12.1" fill="none" stroke="#000" stroke-width="1"/>
<text x="986.6" y="91.7" text-anchor="middle">L7-018</text>
<text x="1070.2" y="74.8">PREMIUM E/S 1</text>
<rect x="1093.3" y="82.4" width="53.5" height="12.1" fill="none" stroke="#000" stroke-width="1"/>
<text x="1120.0" y="91.7" text-anchor="middle">L7-017</text>
<text x="1178.2" y="74.8">PREMIUM E/S 2</text>
<text x="1031" y="191.3">PREMIUM BED 3</text>
<rect x="1057.3" y="198.3" width="53.4" height="13.1" fill="none" stroke="#000" stroke-width="1"/>
<text x="1084.0" y="208.4" text-anchor="middle">L7-016</text>
<rect x="1066" y="214.5" width="33.8" height="16.1" fill="none" stroke="#000"/><rect x="1072.9" y="218.2" width="20.8" height="9.4" fill="#fff"/>
<text x="1083.3" y="226.2" font-size="8.3" text-anchor="middle">CP03</text>
<text x="928.7" y="430.5">BED 1</text>
<rect x="922.4" y="437.3" width="53.1" height="12.9" fill="none" stroke="#000" stroke-width="1"/>
<text x="949.0" y="447.5" text-anchor="middle">L7-003</text>
<text x="1066.6" y="384.5">E/S 2</text>
<text x="1016.7" y="398.7">E/S 1</text>
<rect x="1057.1" y="391" width="53.3" height="13.0" fill="none" stroke="#000" stroke-width="1"/>
<text x="1083.8" y="401.4" text-anchor="middle">L7-006</text>
<rect x="1007.4" y="405.5" width="53.2" height="12.8" fill="none" stroke="#000" stroke-width="1"/>
<text x="1034.0" y="416" text-anchor="middle">L7-004</text>
<text x="1134.7" y="430.6">BED 2</text>
<rect x="1128.2" y="437.6" width="53.3" height="12.8" fill="none" stroke="#000" stroke-width="1"/>
<text x="1154.8" y="447.6" text-anchor="middle">L7-005</text>
<text x="920.6" y="542.7">BALCONY X</text>
<rect x="932.2" y="550.2" width="53.5" height="12.4" fill="none" stroke="#000" stroke-width="1"/>
<text x="959.0" y="560" text-anchor="middle">L7-015</text>
<text x="949.8" y="665.7">BED 3</text>
<rect x="942.3" y="672.2" width="53.2" height="13.1" fill="none" stroke="#000" stroke-width="1"/>
<text x="968.9" y="682.8" text-anchor="middle">L7-001</text>
<text x="1016.7" y="697.4">E/S 3</text>
<text x="1066.6" y="700.5">E/S 4</text>
<rect x="1007.4" y="704.7" width="53.2" height="12.8" fill="none" stroke="#000" stroke-width="1"/>
<text x="1034.0" y="715.1" text-anchor="middle">L7-002</text>
<rect x="1057.1" y="707.6" width="53.3" height="12.5" fill="none" stroke="#000" stroke-width="1"/>
<text x="1083.8" y="717.5" text-anchor="middle">L7-008</text>
<text x="1128.6" y="681">BED 4</text>
<rect x="1122.2" y="687.4" width="53.2" height="12.9" fill="none" stroke="#000" stroke-width="1"/>
<text x="1148.8" y="698.2" text-anchor="middle">L7-007</text>
<g fill="none" stroke="#7d9ff5" stroke-width="1">
<path d="M886.4 192.5 H984.6 M883 199.2 L896 186.2 M977.5 199.2 L991 185.7 M984.6 182.7 V280"/>
<path d="M922.3 280 V358" stroke="#6d8cff"/><path d="M916 273.5 L929.5 287 M916 349 L927 362" stroke="#6d8cff"/>
<path d="M913 280.3 H977.8" stroke="#5a78c8"/><path d="M920 355.9 H933" stroke="#4a6ab8" stroke-width="1.4"/>
<path d="M889.4 192 V202.5" stroke="#30509c" stroke-width="1.6"/>
</g>
<circle cx="889.4" cy="190.3" r="2.6" fill="#3a6fc8"/><circle cx="984.6" cy="220.5" r="2.8" fill="#5b9be0" stroke="#3a6ab0" stroke-width="0.8"/>
<circle cx="950.6" cy="280" r="2.8" fill="#5b9be0" stroke="#3a6ab0" stroke-width="0.8"/><circle cx="920.4" cy="355.9" r="3" fill="#3a78d0"/>
<text x="919.6" y="185.7" font-size="10.6" fill="#1a4fc4">2475.0</text>
<path d="M930.7 207 V216.7 M943.3 207 V216.7" stroke="#1a4fc4" stroke-width="1.2" fill="none"/><path d="M930.7 211.3 H943.3" stroke="#1a4fc4" stroke-width="0.9" fill="none"/>
<text transform="translate(917,333.8) rotate(-90) scale(0.77,1)" font-size="15.2" fill="#1759cf">1980.3</text>
<path d="M934.5 314 V323.7 M947.7 314 V323.7 M934.5 317.7 H947.7" stroke="#1e62d6" stroke-width="1.1" fill="none"/>
<rect x="838" y="807" width="357" height="18" fill="#f0f0f0"/>
<text x="862" y="820" font-size="12" textLength="33.5" lengthAdjust="spacingAndGlyphs">1 : 100</text>
</svg>
<svg style="left:910px;top:806px" width="285" height="19" viewBox="910 806 285 19">
<rect x="917.5" y="808.5" width="15" height="11" rx="1.5" fill="#e3e7ec" stroke="#444"/>
<path d="M939.5 813.5 h10 v7 h-10 z M939.5 813.5 l4 -4.5 h10 l-4 4.5 M949.5 820.5 l4 -4.5 v-7" fill="#dfe3e8" stroke="#333" stroke-width="1"/>
<circle cx="964" cy="814" r="3.6" fill="#f7c948" stroke="#d89a1e" stroke-width="0.8"/><path d="M964 808 v1.6 M964 818.5 v1.6 M958 814 h1.6 M968.5 814 h1.6 M959.8 809.8 l1.1 1.1 M968.2 809.8 l-1.1 1.1 M959.8 818.2 l1.1 -1.1" stroke="#d89a1e" stroke-width="1"/>
<path d="M966.5 815.5 l5.5 5.5 M972 815.5 l-5.5 5.5" stroke="#d11f1f" stroke-width="2"/>
<circle cx="987" cy="813" r="3.6" fill="none" stroke="#bdbdbd" stroke-dasharray="1.5 1"/><path d="M983.5 820 h5 M990 816 l4.5 4.5 M994.5 816 l-4.5 4.5" stroke="#c4c4c4" stroke-width="1.2"/>
<path d="M1001 816 h3 M1005.5 820.5 v-10 h10" fill="none" stroke="#2a6fc0" stroke-width="1.6"/><path d="M1008.5 820 v-6.5 h6.5" fill="none" stroke="#555" stroke-width="1"/><path d="M1009.5 813.5 l6.5 6.5 M1016 813.5 l-6.5 6.5" stroke="#d11f1f" stroke-width="2"/>
<path d="M1021.5 816 h3 M1026 820.5 v-10 h6" fill="none" stroke="#2a6fc0" stroke-width="1.6"/><path d="M1029 820 v-6.5 h3 M1029 816.5 h2.5" fill="none" stroke="#555" stroke-width="1"/><circle cx="1034" cy="812.3" r="2.8" fill="#eaf3ff" stroke="#2a6fc0" stroke-width="1.1"/><path d="M1033 816 h2 v3 h-2 z" fill="#2a6fc0"/>
<path d="M1042.5 811.5 q3 -0.5 4 3 q1.5 4 5 3.5 q4 -0.5 6 -4 q0.5 -3 -4 -4.5" fill="none" stroke="#333" stroke-width="1.1"/><ellipse cx="1049.2" cy="816" rx="2.6" ry="2.2" fill="#dbe9f8" stroke="#3a5f8a" stroke-width="0.9"/><ellipse cx="1055" cy="814.8" rx="2.4" ry="2" fill="#dbe9f8" stroke="#3a5f8a" stroke-width="0.9"/>
<circle cx="1071" cy="813.5" r="2.8" fill="#eaf3ff" stroke="#2a6fc0" stroke-width="1.1"/><path d="M1070 817 h2 v2.5 h-2 z" fill="#2a6fc0"/>
<path d="M1085 813.5 l4 -2 l4.5 2 v5 l-4.5 2.3 l-4 -2.3 z" fill="#6aa8e8" stroke="#2a62a8" stroke-width="0.8"/><path d="M1089 809 q3.5 -2.5 6 1 l1.3 -0.8 l-0.5 3.3 l-3 -1 l1.1 -0.7 q-1.6 -2 -4 -0.6 z" fill="#3aa845"/><path d="M1092 814.5 l6.5 6.5 M1098.500 814.5 l-6.5 6.5" stroke="#d11f1f" stroke-width="2"/>
<path d="M1106 810.5 h10 v10 h-10 z" fill="none" stroke="#111" stroke-width="1.5"/><path d="M1107.5 809 v2 M1110.5 809 v2 M1113.5 809 v2 M1107.5 820 v2 M1110.5 820 v2 M1113.5 820 v2" stroke="#111" stroke-width="1.3"/><rect x="1113.5" y="813.5" width="6" height="6" rx="1" fill="#fff" stroke="#111" stroke-width="1.1"/><circle cx="1116.500" cy="816.5" r="1.2" fill="#111"/>
<path d="M1126 820.5 v-7 l6 -4 l6 1.5 v9.500 M1129 813 v7.500 M1132 811.500 v9 M1135 812 v8.500 M1126 816.500 h12" fill="none" stroke="#b9b9b9" stroke-width="1"/>
<path d="M1147 808 v4 M1162.500 808 v4 M1147 810 h15.500" stroke="#333" stroke-width="1.2" fill="none"/><path d="M1147 813.500 v7 M1147 817 h7" stroke="#555" stroke-width="1" stroke-dasharray="2 1.5" fill="none"/><rect x="1155.5" y="815" width="7" height="5.500" rx="1" fill="#777" stroke="#333" stroke-width="0.8"/><path d="M1157 815 v-1.200 a2 2 0 0 1 4 0 v1.200" fill="none" stroke="#333" stroke-width="1"/>
<path d="M1177.700 812.300 L1173.400 815.500 L1177.700 818.700" fill="none" stroke="#444" stroke-width="2.300"/>
</svg>
<!-- annotation overlay -->
<div style="left:149px;top:408px;width:149px;height:20px;border:3px solid #f64242;background:#fff;box-shadow:2px 3px 4px rgba(0,0,0,.45),inset 1px 2px 3px rgba(0,0,0,.32);"></div>
<span class="t" style="left:154.1px;top:410.23px;letter-spacing:0.141px;">Blue</span>
<div style="left:419px;top:481px;width:360px;height:23px;border:3px solid #f64242;background:#fff;box-shadow:2px 3px 4px rgba(0,0,0,.45),inset 1px 2px 3px rgba(0,0,0,.32);"></div>
<span class="t" style="left:421.6px;top:484.63px;letter-spacing:0.116px;">Blue</span>
<div style="left:233px;top:775px;width:76px;height:25px;border:3px solid #f64242;background:#cccccc;box-shadow:2px 3px 4px rgba(0,0,0,.45),inset 1px 2px 3px rgba(0,0,0,.32);"></div>
<span class="t" style="left:254.7px;top:779.43px;color:#9c9c9c;letter-spacing:0.566px;">Apply</span>
<svg style="left:290px;top:400px;filter:drop-shadow(2px 3px 2px rgba(0,0,0,.45))" width="140" height="110" viewBox="290 400 140 110">
<path d="M304.7 416.8 L403.5 486.2" stroke="#f64242" stroke-width="4.4" stroke-linecap="round" fill="none"/>
<polygon points="414.3,493.7 397.2,491.8 405.6,479.8" fill="#f64242"/>
</svg>
</body></html>
